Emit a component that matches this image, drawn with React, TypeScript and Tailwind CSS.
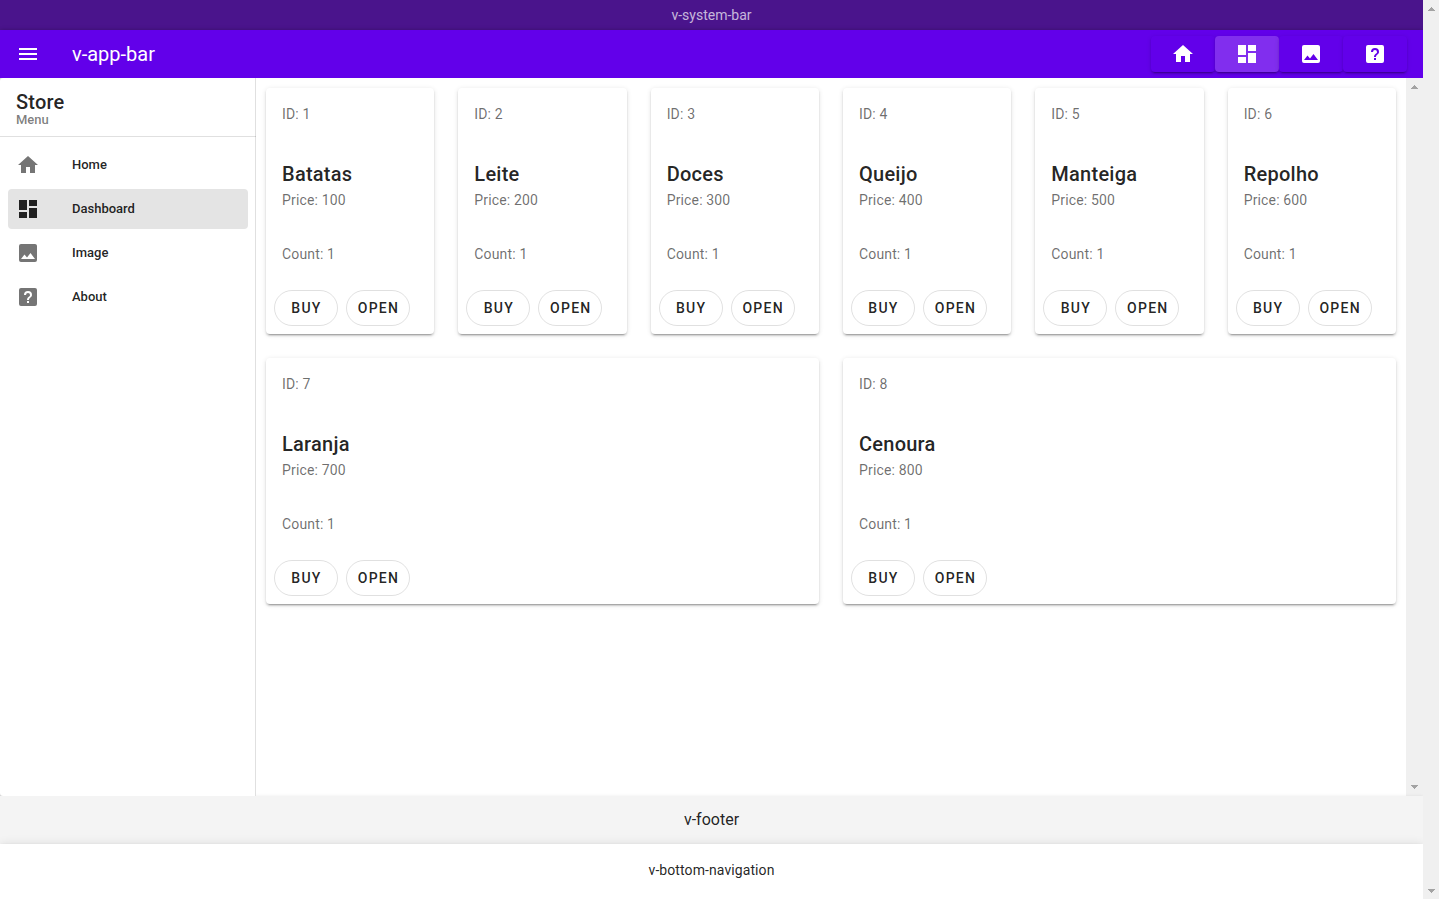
import React from "react";

const icons = {
  menu: "M3,6H21V8H3V6M3,11H21V13H3V11M3,16H21V18H3V16Z",
  home: "M10,20V14H14V20H19V12H22L12,3L2,12H5V20H10Z",
  dashboard: "M13,3V9H21V3M13,21H21V11H13M3,21H11V15H3M3,13H11V3H3V13Z",
  image:
    "M8.5,13.5L11,16.5L14.5,12L19,18H5M21,19V5C21,3.89 20.1,3 19,3H5A2,2 0 0,0 3,5V19A2,2 0 0,0 5,21H19A2,2 0 0,0 21,19Z",
  help: "M11,18H13V16H11V18M12,6A4,4 0 0,0 8,10H10A2,2 0 0,1 12,8A2,2 0 0,1 14,10C14,12 11,11.75 11,15H13C13,12.75 16,12.5 16,10A4,4 0 0,0 12,6M5,3H19A2,2 0 0,1 21,5V19A2,2 0 0,1 19,21H5A2,2 0 0,1 3,19V5A2,2 0 0,1 5,3Z",
};

type IconName = keyof typeof icons;

function Icon({ name }: { name: IconName }) {
  return (
    <svg className="size-6 shrink-0" viewBox="0 0 24 24" fill="currentColor">
      <path d={icons[name]} />
    </svg>
  );
}

const links: { icon: IconName; label: string; active?: boolean }[] = [
  { icon: "home", label: "Home" },
  { icon: "dashboard", label: "Dashboard", active: true },
  { icon: "image", label: "Image" },
  { icon: "help", label: "About" },
];

const products = ["Batatas", "Leite", "Doces", "Queijo", "Manteiga", "Repolho", "Laranja", "Cenoura"].map(
  (name, i) => ({ id: i + 1, name, price: (i + 1) * 100, count: 1 }),
);

type Product = (typeof products)[number];

function PillButton({ label }: { label: string }) {
  return (
    <button className="flex h-9 w-16 items-center justify-center rounded-full border border-black/12 pl-px text-sm font-medium tracking-[1.25px] text-black/87">
      {label}
    </button>
  );
}

function ProductCard({ product }: { product: Product }) {
  return (
    <article className="flex h-[246px] flex-col rounded bg-white shadow-[0_3px_1px_-2px_rgba(0,0,0,0.2),0_2px_2px_0_rgba(0,0,0,0.14),0_1px_5px_0_rgba(0,0,0,0.12)]">
      <p className="px-4 pt-4 text-sm leading-5 tracking-[0.15px] text-black/58">ID: {product.id}</p>
      <h2 className="mt-[34px] px-4 text-xl leading-8 font-medium tracking-[0.25px] text-black/87">{product.name}</h2>
      <p className="px-4 text-sm leading-5 tracking-[0.15px] text-black/58">Price: {product.price}</p>
      <p className="mt-[34px] px-4 text-sm leading-5 tracking-[0.15px] text-black/58">Count: {product.count}</p>
      <div className="mt-auto flex gap-2 p-2">
        <PillButton label="BUY" />
        <PillButton label="OPEN" />
      </div>
    </article>
  );
}

function Arrow({ down = false }: { down?: boolean }) {
  return (
    <svg className="h-[17px] w-[17px] shrink-0" viewBox="0 0 17 17" shapeRendering="crispEdges" fill="#a3a3a3">
      {down ? (
        <path d="M5 7h7v1h-1v1h-1v1h-1v1h-1v-1h-1v-1h-1v-1h-1z" />
      ) : (
        <path d="M8 7h1v1h1v1h1v1h1v1h-7v-1h1v-1h1v-1h1z" />
      )}
    </svg>
  );
}

export default function App() {
  return (
    <div className="flex h-[899px] w-[1439px] overflow-hidden bg-white font-['Roboto',sans-serif] text-black/87">
      <div className="flex w-[1423px] shrink-0 flex-col">
        <div className="flex h-[30px] items-center justify-center bg-[#4a148c] text-sm text-white/70">
          <span>v-system-bar</span>
        </div>
        <header className="relative flex h-12 items-center bg-[#6200ea] pr-4 pl-4 text-white shadow-[0_0_4px_rgba(0,0,0,0.25)] [clip-path:inset(-5px_0_0_0)]">
          <Icon name="menu" />
          <h1 className="ml-8 text-xl leading-[30px]">v-app-bar</h1>
          <nav className="ml-auto flex">
            {links.map((l) => (
              <button
                key={l.label}
                aria-label={l.label}
                className={`flex h-9 w-16 items-center justify-center rounded shadow-[0_3px_1px_-2px_rgba(0,0,0,0.2),0_2px_2px_0_rgba(0,0,0,0.14),0_1px_5px_0_rgba(0,0,0,0.12)] ${
                  l.active ? "bg-[#812eee]" : "bg-[#6200ea]"
                }`}
              >
                <Icon name={l.icon} />
              </button>
            ))}
          </nav>
        </header>
        <div className="flex h-[718px] bg-[linear-gradient(to_right,#d8d8d8_4px,#fff_4px)]">
          <aside className="relative z-10 w-64 rounded-l-[3px] border-r border-black/12 bg-white">
            <div className="-mr-px h-[59px] border-b border-black/12 px-4 pt-3">
              <h2 className="text-xl leading-6 font-medium tracking-[0.2px]">Store</h2>
              <p className="-mt-px text-[13px] leading-[13px] font-medium text-black/52">Menu</p>
            </div>
            <nav className="flex flex-col gap-1 py-2 pr-[7px] pl-2">
              {links.map((l) => (
                <a
                  key={l.label}
                  className={`flex h-10 items-center gap-8 rounded px-2 ${
                    l.active ? "bg-[#e4e4e4] text-[#212121]" : "text-[#757575]"
                  }`}
                >
                  <Icon name={l.icon} />
                  <span className="text-[13px] leading-4 font-medium text-black/87">{l.label}</span>
                </a>
              ))}
            </nav>
          </aside>
          <main className="flex w-[1150px] flex-col gap-6 p-2.5">
            <div className="grid grid-cols-6 gap-6">
              {products.slice(0, 6).map((p) => (
                <ProductCard key={p.id} product={p} />
              ))}
            </div>
            <div className="grid grid-cols-2 gap-6">
              {products.slice(6).map((p) => (
                <ProductCard key={p.id} product={p} />
              ))}
            </div>
          </main>
          <div className="flex w-[17px] flex-col justify-between bg-[#f0f0f0] pb-px">
            <Arrow />
            <Arrow down />
          </div>
        </div>
        <footer className="relative flex h-12 items-center justify-center bg-[#f4f4f4] text-base shadow-[0_0_3px_rgba(0,0,0,0.08)] [clip-path:inset(-4px_0_0_0)]">
          <span>v-footer</span>
        </footer>
        <div className="relative flex h-[55px] items-center justify-center bg-white text-sm tracking-[0.09px] shadow-[0_2px_4px_-1px_rgba(0,0,0,0.2),0_4px_5px_0_rgba(0,0,0,0.14),0_1px_10px_0_rgba(0,0,0,0.12)] [clip-path:inset(-10px_0_0_0)]">
          <span className="pb-1">v-bottom-navigation</span>
        </div>
      </div>
      <div className="flex w-4 flex-col justify-between overflow-hidden bg-[#f0f0f0]">
        <Arrow />
        <Arrow down />
      </div>
    </div>
  );
}
